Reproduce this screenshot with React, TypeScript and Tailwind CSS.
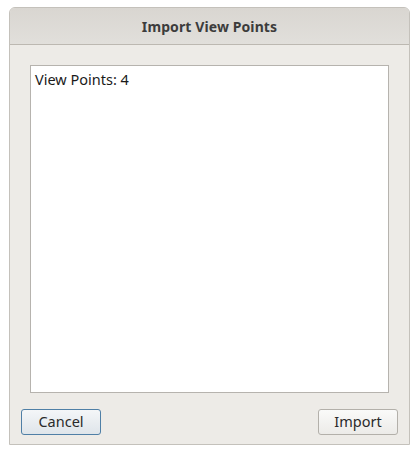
import React from "react";

export default function App() {
  const font = { fontFamily: '"Noto Sans", "DejaVu Sans", sans-serif' };
  return (
    <div className="w-[420px] h-[455px] bg-white pt-[7px] pl-[9px]" style={font}>
      <div className="w-[401px] h-[438px] flex flex-col border border-[#c4c1bb] rounded-t-[6px] bg-[#edebe7] overflow-hidden">
        <div className="h-[37px] shrink-0 flex items-center justify-center bg-gradient-to-b from-[#d9d6d1] to-[#e1dfdb] border-b border-[#bcb8b1]">
          <span className="text-[14px] font-bold text-[#3c3c3c] tracking-[0.1px]">Import View Points</span>
        </div>
        <div className="flex-1 flex flex-col px-[20px] pt-[20px]">
          <div className="w-[359px] h-[328px] bg-white border border-[#b6b3ae] px-[4px] pt-[2px] leading-[22px]">
            <span className="text-[14.5px] text-[#1a1a1a]">View Points: 4</span>
          </div>
          <div className="flex justify-between mt-[16px] -mx-[9px]">
            <button className="w-[80px] h-[26px] rounded-[3px] border border-[#4f7fa6] bg-gradient-to-b from-[#f4f6f8] to-[#dfe5ea] text-[14.5px] text-[#2a2a2a] flex items-center justify-center">
              Cancel
            </button>
            <button className="w-[80px] h-[26px] rounded-[3px] border border-[#b3b0aa] bg-gradient-to-b from-[#fafaf9] to-[#ecebe8] text-[14.5px] text-[#2a2a2a] flex items-center justify-center">
              Import
            </button>
          </div>
        </div>
      </div>
    </div>
  );
}
